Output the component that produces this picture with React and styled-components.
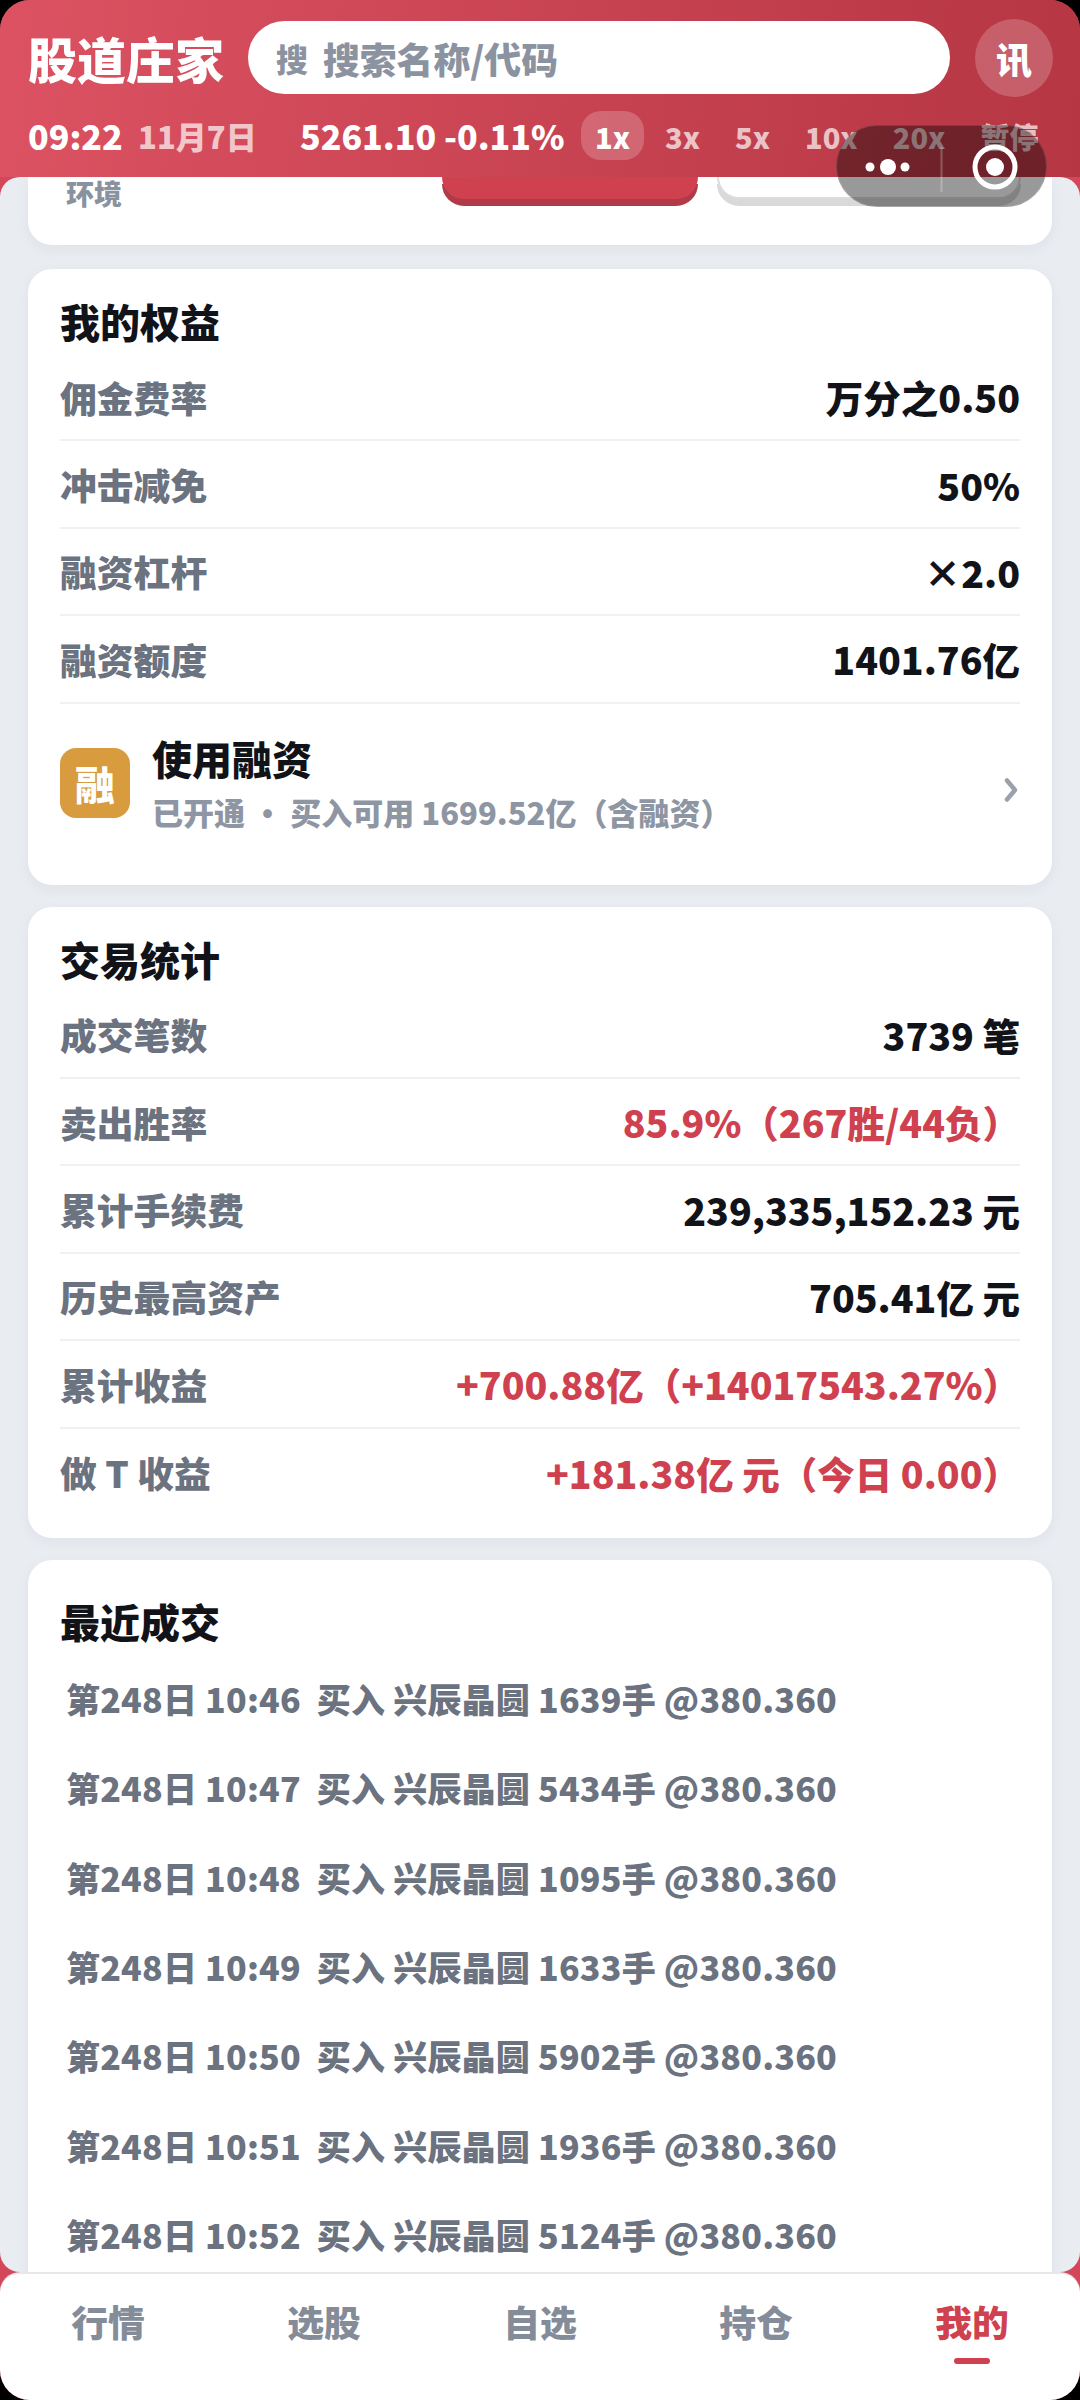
import React from 'react';
import styled, { createGlobalStyle } from 'styled-components';

const GlobalStyle = createGlobalStyle`
  html, body {
    margin: 0;
    padding: 0;
    background: #000;
  }
  * {
    box-sizing: border-box;
  }
`;

const RED = '#d0414f';

const Screen = styled.div`
  position: relative;
  width: 1080px;
  height: 2400px;
  display: flex;
  flex-direction: column;
  overflow: hidden;
  border-radius: 30px;
  background: #d4475a;
  font-family: "Noto Sans CJK SC", "Noto Sans", sans-serif;
  font-weight: 900;
`;

const Header = styled.header`
  flex: 0 0 auto;
  height: 177px;
  padding: 18px 24px 0 28px;
  background: linear-gradient(96deg, #dc5262 0%, #b63643 100%);
`;

const HeaderTop = styled.div`
  display: flex;
  align-items: center;
  height: 79px;
`;

const Brand = styled.div`
  flex: none;
  width: 220px;
  font-size: 49px;
  line-height: 60px;
  color: #fff;
  white-space: nowrap;
`;

const SearchBox = styled.div`
  flex: none;
  width: 702px;
  height: 73px;
  display: flex;
  align-items: center;
  gap: 15px;
  padding-left: 28px;
  border-radius: 37px;
  background: #fff;
  color: #8b93a1;
`;

const SearchMark = styled.span`
  font-size: 32px;
`;

const SearchHint = styled.span`
  font-size: 36.8px;
`;

const NewsButton = styled.div`
  flex: none;
  width: 78px;
  height: 78px;
  margin-left: 25px;
  display: flex;
  align-items: center;
  justify-content: center;
  border-radius: 50%;
  background: rgba(255, 255, 255, 0.2);
  color: #fff;
  font-size: 36px;
`;

const TickerRow = styled.div`
  display: flex;
  align-items: center;
  height: 49px;
  margin-top: 14px;
  color: #fff;
  white-space: nowrap;
`;

const Clock = styled.span`
  flex: none;
  font-size: 34px;
  width: 110px;
`;

const DateText = styled.span`
  flex: none;
  font-size: 31px;
  width: 162px;
  color: rgba(255, 255, 255, 0.7);
`;

const IndexText = styled.span`
  flex: none;
  font-size: 34px;
  width: 281px;
`;

const SpeedList = styled.div`
  flex: none;
  display: flex;
  gap: 7px;
`;

const Speed = styled.span`
  height: 49px;
  padding: 0 14px;
  display: flex;
  align-items: center;
  border-radius: 20px;
  font-size: 29px;
  color: ${props => (props.$active ? '#fff' : 'rgba(255, 255, 255, 0.7)')};
  background: ${props => (props.$active ? 'rgba(255, 255, 255, 0.2)' : 'transparent')};
`;

const Capsule = styled.div`
  position: absolute;
  top: 125px;
  left: 836px;
  width: 211px;
  height: 82px;
  border-radius: 41px;
  border: 1px solid rgba(255, 255, 255, 0.12);
  background: rgba(0, 0, 0, 0.4);
`;

const Content = styled.main`
  flex: 1 1 auto;
  min-height: 0;
  display: flex;
  flex-direction: column;
  gap: 22px;
  padding: 0 28px;
  overflow: hidden;
  border-radius: 20px;
  background: #e9ecf1;
`;

const Card = styled.section`
  flex: 0 0 auto;
  padding: 32px 32px ${props => props.$bottom || 0}px;
  border-radius: 24px;
  background: #fff;
  box-shadow: 0 4px 14px rgba(30, 40, 60, 0.05);
`;

const RecentCard = styled(Card)`
  padding-top: 41px;
`;

const EnvCard = styled.section`
  flex: 0 0 auto;
  height: 68px;
  margin-bottom: 2px;
  display: flex;
  align-items: flex-start;
  padding-left: 38px;
  border-radius: 0 0 24px 24px;
  background: #fff;
  box-shadow: 0 4px 14px rgba(30, 40, 60, 0.05);
`;

const EnvLabel = styled.div`
  width: 376px;
  font-size: 28px;
  line-height: 32px;
  color: #8a92a0;
`;

const EnvButton = styled.div`
  height: 22px;
  border-radius: 0 0 24px 24px;
`;

const EnvActive = styled(EnvButton)`
  width: 256px;
  margin-right: 19px;
  background: ${RED};
  box-shadow: 0 7px 0 #b03a47;
`;

const EnvIdle = styled(EnvButton)`
  width: 304px;
  background: #fff;
  border: 2px solid #dcdcdc;
  border-top: 0;
  box-shadow: 0 7px 0 #d9d9d9;
`;

const CardTitle = styled.h2`
  margin: 0 0 13px;
  font-size: 40px;
  line-height: 40px;
  font-weight: 900;
  color: #111318;
`;

const Row = styled.div`
  height: 87.4px;
  display: flex;
  align-items: center;
  justify-content: space-between;
  border-bottom: ${props => (props.$last ? '0' : '2px solid #f0f1f4')};
`;

const Label = styled.span`
  font-size: 36.8px;
  color: #6b7280;
`;

const Value = styled.span`
  font-size: 37.5px;
  color: ${props => (props.$red ? RED : '#111318')};
`;

const MarginRow = styled.div`
  height: 181px;
  display: flex;
  align-items: flex-start;
  padding-top: 44px;
`;

const MarginIcon = styled.div`
  flex: none;
  width: 70px;
  height: 70px;
  display: flex;
  align-items: center;
  justify-content: center;
  border-radius: 16px;
  background: #d89c3e;
  color: #fff;
  font-size: 40px;
`;

const MarginText = styled.div`
  flex: 1;
  margin-left: 22px;
  margin-top: -15px;
`;

const MarginTitle = styled.div`
  font-size: 40px;
  line-height: 50px;
  color: #111318;
`;

const MarginSub = styled.div`
  font-size: 31px;
  line-height: 44px;
  margin-top: 7px;
  color: #8f96a3;
`;

const Chevron = styled.svg`
  flex: none;
  width: 14px;
  height: 24px;
  margin-top: 30px;
  margin-right: 2px;
  color: #9aa1ac;
`;

const TradeRow = styled.div`
  height: 89.3px;
  display: flex;
  align-items: center;
  padding-left: 6px;
  font-size: 34px;
  letter-spacing: 0.2px;
  color: #6b7280;
  white-space: pre;
`;

const TabBar = styled.nav`
  flex: 0 0 auto;
  height: 128px;
  display: grid;
  grid-template-columns: repeat(5, 1fr);
  border-top: 2px solid #e5e7eb;
  border-radius: 20px 20px 0 0;
  background: #fff;
`;

const Tab = styled.div`
  position: relative;
  text-align: center;
  padding-top: 23px;
  font-size: 36.8px;
  line-height: 48px;
  color: ${props => (props.$active ? RED : '#858c99')};
`;

const TabMark = styled.span`
  position: absolute;
  left: 50%;
  top: 84px;
  width: 36px;
  height: 6px;
  margin-left: -18px;
  border-radius: 3px;
  background: ${RED};
`;

const benefits = [
  ['佣金费率', '万分之0.50'],
  ['冲击减免', '50%'],
  ['融资杠杆', '×2.0'],
  ['融资额度', '1401.76亿'],
];

const stats = [
  ['成交笔数', '3739 笔'],
  ['卖出胜率', '85.9%（267胜/44负）', true],
  ['累计手续费', '239,335,152.23 元'],
  ['历史最高资产', '705.41亿 元'],
  ['累计收益', '+700.88亿（+14017543.27%）', true],
  ['做 T 收益', '+181.38亿 元（今日 0.00）', true],
];

const trades = [
  ['10:46', '1639'],
  ['10:47', '5434'],
  ['10:48', '1095'],
  ['10:49', '1633'],
  ['10:50', '5902'],
  ['10:51', '1936'],
  ['10:52', '5124'],
];

const speeds = ['1x', '3x', '5x', '10x', '20x', '暂停'];
const tabs = ['行情', '选股', '自选', '持仓', '我的'];

export default function App() {
  return (
    <Screen>
      <GlobalStyle />
      <Header>
        <HeaderTop>
          <Brand>股道庄家</Brand>
          <SearchBox>
            <SearchMark>搜</SearchMark>
            <SearchHint>搜索名称/代码</SearchHint>
          </SearchBox>
          <NewsButton>讯</NewsButton>
        </HeaderTop>
        <TickerRow>
          <Clock>09:22</Clock>
          <DateText>11月7日</DateText>
          <IndexText>5261.10 -0.11%</IndexText>
          <SpeedList>
            {speeds.map((s, i) => <Speed key={s} $active={i === 0}>{s}</Speed>)}
          </SpeedList>
        </TickerRow>
      </Header>

      <Content>
        <EnvCard>
          <EnvLabel>环境</EnvLabel>
          <EnvActive />
          <EnvIdle />
        </EnvCard>

        <Card>
          <CardTitle>我的权益</CardTitle>
          {benefits.map(([label, value]) => (
            <Row key={label}>
              <Label>{label}</Label>
              <Value>{value}</Value>
            </Row>
          ))}
          <MarginRow>
            <MarginIcon>融</MarginIcon>
            <MarginText>
              <MarginTitle>使用融资</MarginTitle>
              <MarginSub>已开通 · 买入可用 1699.52亿（含融资）</MarginSub>
            </MarginText>
            <Chevron viewBox="0 0 14 24" fill="none">
              <path d="M3 2.5l8 9.5-8 9.5" stroke="currentColor" strokeWidth="4.5" strokeLinecap="round" strokeLinejoin="round" />
            </Chevron>
          </MarginRow>
        </Card>

        <Card $bottom={22}>
          <CardTitle>交易统计</CardTitle>
          {stats.map(([label, value, red], i) => (
            <Row key={label} $last={i === stats.length - 1}>
              <Label>{label}</Label>
              <Value $red={red}>{value}</Value>
            </Row>
          ))}
        </Card>

        <RecentCard $bottom={40}>
          <CardTitle>最近成交</CardTitle>
          {trades.map(([time, qty]) => (
            <TradeRow key={time}>{`第248日 ${time}  买入 兴辰晶圆 ${qty}手 @380.360`}</TradeRow>
          ))}
        </RecentCard>
      </Content>

      <TabBar>
        {tabs.map((t, i) => (
          <Tab key={t} $active={i === tabs.length - 1}>
            {t}
            {i === tabs.length - 1 && <TabMark />}
          </Tab>
        ))}
      </TabBar>

      <Capsule>
        <svg width="211" height="82" viewBox="0 0 211 82" fill="none">
          <circle cx="33" cy="41" r="4.5" fill="#fff" />
          <circle cx="51" cy="41" r="8" fill="#fff" />
          <circle cx="68" cy="41" r="4.5" fill="#fff" />
          <path d="M104.5 21v45" stroke="rgba(255,255,255,0.25)" strokeWidth="2" />
          <circle cx="158" cy="41" r="20" stroke="#fff" strokeWidth="5" />
          <circle cx="158" cy="41" r="9" fill="#fff" />
        </svg>
      </Capsule>
    </Screen>
  );
}
